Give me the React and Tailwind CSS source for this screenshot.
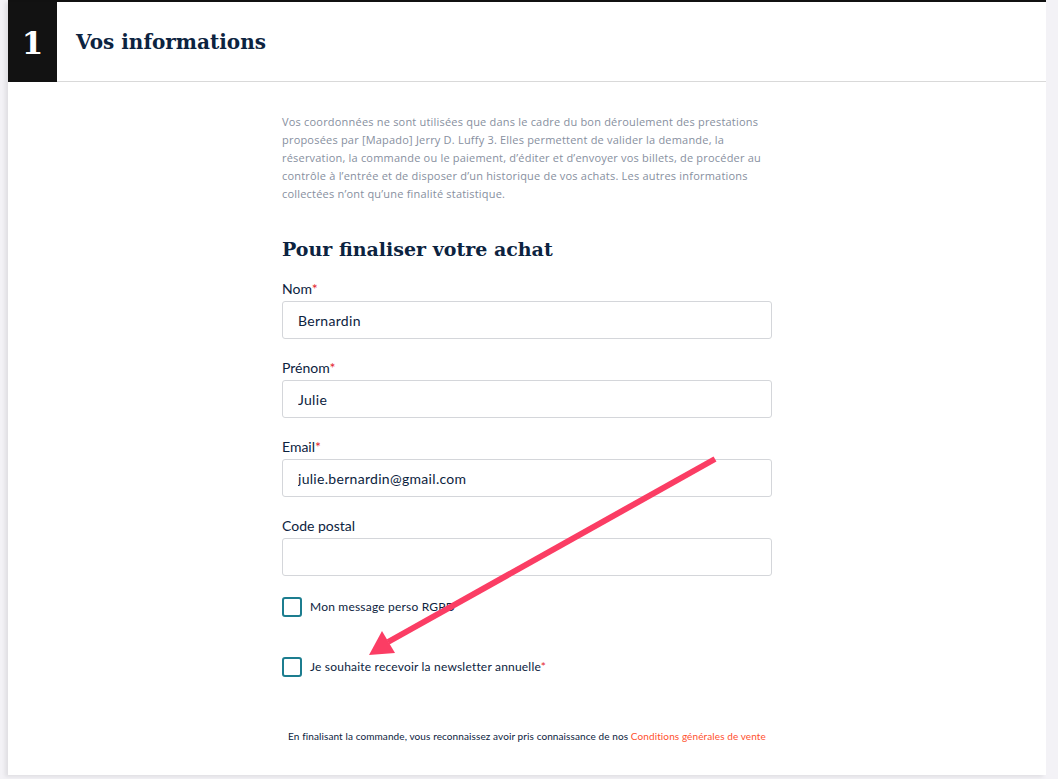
import { useState } from 'react'

const sans = { fontFamily: 'Lato, "Noto Sans", sans-serif' }
const serif = { fontFamily: '"DejaVu Serif", serif' }

function Field({ label, required, value }) {
  return (
    <div className="flex flex-col">
      <label className="text-[14px] leading-[18px] text-[#0c2340]">
        {label}
        {required && <span className="text-[#e3262f]">*</span>}
      </label>
      <input
        defaultValue={value}
        className="mt-[3px] h-[38px] w-full rounded-[3px] border border-[#d4d6da] bg-white px-[15px] text-[14px] tracking-[0.3px] text-[#0c2340] outline-none"
        style={sans}
      />
    </div>
  )
}

function Check({ children }) {
  const [on, setOn] = useState(false)
  return (
    <label className="flex items-center gap-[8px] text-[12px] tracking-[0.2px] text-[#0c2340]">
      <button
        type="button"
        onClick={() => setOn(!on)}
        className="h-[20px] w-[20px] shrink-0 rounded-[3px] border-2 border-[#1c7d8f] bg-white"
      />
      <span>{children}</span>
    </label>
  )
}

export default function App() {
  return (
    <div className="relative h-[779px] w-[1058px] overflow-hidden bg-[#f3f2f6]" style={sans}>
      <div className="ml-[8px] flex h-[775px] w-[1038px] flex-col border-t-2 border-[#111] bg-white shadow-[-3px_2px_4px_rgba(0,0,0,0.08)]">
        {/* step header */}
        <div className="flex h-[80px] items-center border-b border-[#d9d9d9]">
          <div
            className="flex h-[80px] w-[49px] items-center justify-center bg-[#121212] pt-[4px] text-[31px] font-bold text-white"
            style={serif}
          >
            1
          </div>
          <h1 className="ml-[19px] text-[20px] font-bold text-[#0c2340]" style={serif}>
            Vos informations
          </h1>
        </div>

        <div className="mx-auto flex w-[490px] flex-col pt-[31px]">
          <p
            className="text-[11px] leading-[18px] tracking-[0.2px] text-[#878fa0]"
            style={{ fontFamily: '"Open Sans", "Noto Sans", sans-serif' }}
          >
            Vos coordonnées ne sont utilisées que dans le cadre du bon déroulement des prestations proposées par [Mapado] Jerry D. Luffy 3. Elles permettent de valider la demande, la réservation, la commande ou le paiement, d’éditer et d’envoyer vos billets, de procéder au contrôle à l’entrée et de disposer d’un historique de vos achats. Les autres informations collectées n’ont qu’une finalité statistique.
          </p>

          <h2 className="mt-[32px] text-[19px] font-bold leading-[28px] text-[#0c2340]" style={serif}>
            Pour finaliser votre achat
          </h2>

          <div className="mt-[17px] flex flex-col gap-[20px]">
            <Field label="Nom" required value="Bernardin" />
            <Field label="Prénom" required value="Julie" />
            <Field label="Email" required value="julie.bernardin@gmail.com" />
            <Field label="Code postal" value="" />
          </div>

          <div className="mt-[21px] flex flex-col gap-[40px]">
            <Check>Mon message perso RGPD</Check>
            <Check>
              Je souhaite recevoir la newsletter annuelle<span className="text-[#e3262f]">*</span>
            </Check>
          </div>

          <p className="mt-[52px] text-center text-[10px] tracking-[0.1px] text-[#0c2340]">
            En finalisant la commande, vous reconnaissez avoir pris connaissance de nos{' '}
            <a href="#" className="text-[#ff4f2e]">Conditions générales de vente</a>
          </p>
        </div>
      </div>

      {/* annotation arrow */}
      <svg className="pointer-events-none absolute left-0 top-0" width="1058" height="779">
        <line x1="715" y1="459" x2="388" y2="642" stroke="#fb3d64" strokeWidth="6" />
        <polygon points="369,655 382,631 395,653" fill="#fb3d64" />
      </svg>
    </div>
  )
}
